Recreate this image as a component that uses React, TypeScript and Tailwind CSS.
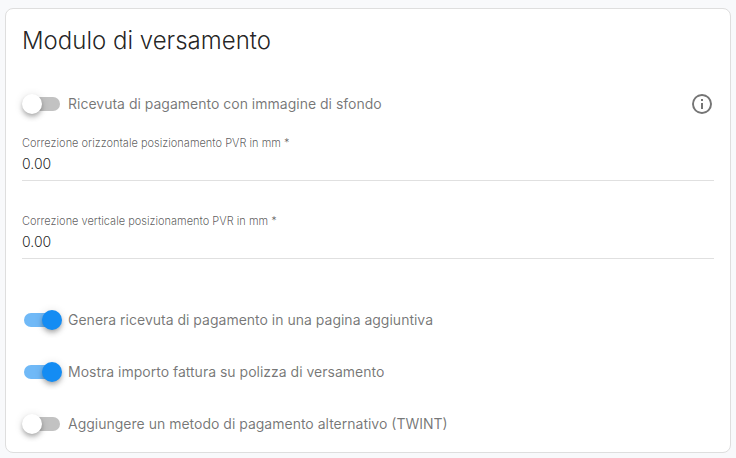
import { useId, useState } from "react";

type SwitchProps = { label: string; initial?: boolean };

function Switch({ label, initial = false }: SwitchProps) {
  const [on, setOn] = useState(initial);
  return (
    <label className="flex h-6 cursor-pointer items-center gap-1.5 text-sm font-normal text-black/55">
      <span className="relative flex h-5 w-10 shrink-0 items-center px-0.5">
        <input
          type="checkbox"
          role="switch"
          checked={on}
          onChange={(e) => setOn(e.target.checked)}
          className="peer h-3.5 w-9 cursor-pointer appearance-none rounded-full bg-[#c2c2c2] checked:bg-[#70b9f7]"
        />
        <span className="pointer-events-none absolute left-0 top-0 size-5 rounded-full bg-white shadow-[0_2px_4px_-1px_rgba(0,0,0,0.2),0_4px_5px_0_rgba(0,0,0,0.14),0_1px_10px_0_rgba(0,0,0,0.12)] transition-transform peer-checked:translate-x-5 peer-checked:bg-[#148cf3]" />
      </span>
      <span>{label}</span>
    </label>
  );
}

function Field({ label, initial }: { label: string; initial: string }) {
  const id = useId();
  const [value, setValue] = useState(initial);
  return (
    <div className="flex flex-col border-b border-black/12 pb-[5px]">
      <label htmlFor={id} className="text-[11px] leading-4 font-light text-black/65">
        {label} *
      </label>
      <input
        id={id}
        type="text"
        inputMode="decimal"
        required
        value={value}
        onChange={(e) => setValue(e.target.value)}
        className="h-6 w-full bg-transparent text-sm font-light text-black/87 outline-none"
      />
    </div>
  );
}

export default function App() {
  return (
    <main className="min-h-screen bg-[#f8f9fb] px-[5px] pt-2 pb-[5px] font-['Inter',sans-serif]">
      <section className="rounded-lg border border-[#dedede] bg-white px-4 py-4">
        <h2 className="text-2xl leading-8 font-light text-black/87">Modulo di versamento</h2>
        <div className="mt-[35px] flex items-center justify-between">
          <Switch label="Ricevuta di pagamento con immagine di sfondo" />
          <button type="button" aria-label="Informazioni" className="flex size-6 items-center justify-center text-[#757575]">
            <svg viewBox="0 0 24 24" className="size-6" fill="currentColor" aria-hidden="true">
              <path d="M11 9h2V7h-2m1 13c-4.41 0-8-3.59-8-8s3.59-8 8-8 8 3.59 8 8-3.59 8-8 8m0-18A10 10 0 0 0 2 12a10 10 0 0 0 10 10 10 10 0 0 0 10-10A10 10 0 0 0 12 2m-1 15h2v-6h-2z" />
            </svg>
          </button>
        </div>
        <div className="mt-[19px] flex flex-col gap-8">
          <Field label="Correzione orizzontale posizionamento PVR in mm" initial="0.00" />
          <Field label="Correzione verticale posizionamento PVR in mm" initial="0.00" />
        </div>
        <div className="mt-[49px] flex flex-col gap-7">
          <Switch label="Genera ricevuta di pagamento in una pagina aggiuntiva" initial />
          <Switch label="Mostra importo fattura su polizza di versamento" initial />
          <Switch label="Aggiungere un metodo di pagamento alternativo (TWINT)" />
        </div>
      </section>
    </main>
  );
}
